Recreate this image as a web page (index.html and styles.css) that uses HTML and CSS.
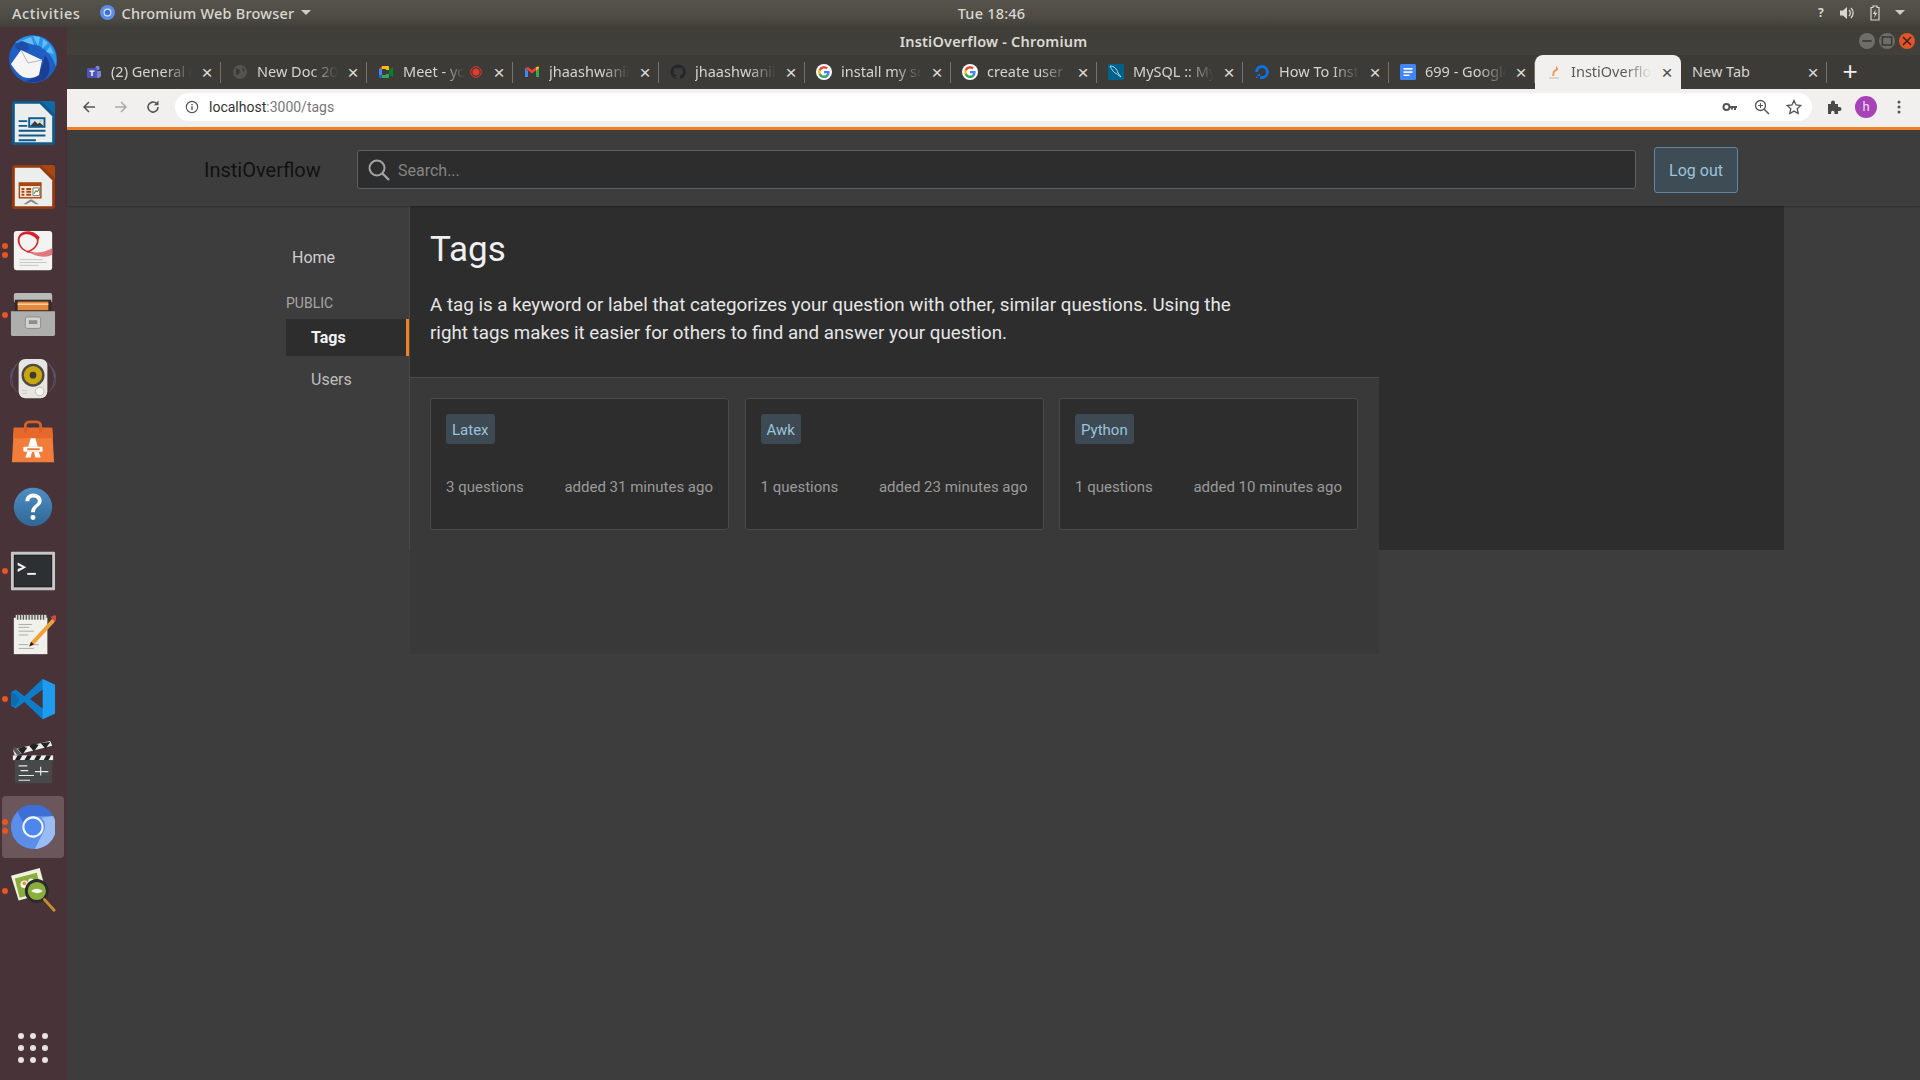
FILE: index.html
```html
<!DOCTYPE html>
<html lang="en">
<head>
<meta charset="utf-8">
<title>InstiOverflow - Chromium</title>
<link rel="stylesheet" href="styles.css">
</head>
<body>
<header class="topbar">
  <div class="tb-left">
    <span class="tb-act">Activities</span>
    <span class="tb-app">
      <svg class="tb-chrome" viewBox="0 0 16 16"><circle cx="8" cy="8" r="8" fill="#5c8de8"/><circle cx="8" cy="8" r="3.6" fill="#3f6fd8" stroke="#dfe8fb" stroke-width="1.2"/></svg>
      Chromium Web Browser
      <i class="caret"></i>
    </span>
  </div>
  <div class="tb-clock">Tue 18:46</div>
  <div class="tb-right">
    <span class="tb-q">?</span>
    <svg class="tb-ic" viewBox="0 0 16 16"><path d="M1 5.5h3L8 2v12l-4-3.500H1z" fill="#d8d6d0"/><path d="M10 5a4 4 0 0 1 0 6M12 3a7 7 0 0 1 0 10" fill="none" stroke="#d8d6d0" stroke-width="1.300"/></svg>
    <svg class="tb-ic" viewBox="0 0 16 16"><path d="M6 1h4v1.500h2V15H4V2.500h2z" fill="none" stroke="#d8d6d0" stroke-width="1.200"/><path d="M9 4 5.800 9H8l-1 4 3.300-5.200H8z" fill="#d8d6d0"/></svg>
    <i class="caret caret-r"></i>
  </div>
</header>

<div class="shell">
  <nav class="dock">
    <div class="dock-item">
      <svg class="dock-ic dock-ic-full" viewBox="0 0 48 48"><circle cx="24" cy="24" r="24" fill="#1f5fc4"/><path d="M6 8C16-2 36-3 45 14c3 6 3 13 2 18-3-10-9-17-17-21C22 7 14 8 6 8z" fill="#2b95ea"/><path d="M12 6 22 2l3 8zM24 1l7 1-2 9zM34 4l5 4-6 6zM41 11l4 8-8-2z" fill="#62bdf2"/><path d="M36 20c6 8 6 18 0 24-6 4-14 4-20 2 8-1 16-6 20-26z" fill="#1b3f94"/><path d="M6 12c2-5 7-7 10-5 3 1 4 4 4 7l-8 4z" fill="#1d4fa8"/><path d="M2 29 12 15l21 10-3 15c-4 3-10 4-16 2-5-3-9-8-12-13z" fill="#f5f5f3"/><path d="M12 15l7 13 14-3" fill="none" stroke="#b4b8c0"/></svg>
    </div>
    <div class="dock-item">
      <svg class="dock-ic" viewBox="0 0 48 48"><path d="M2 4a3 3 0 0 1 3-3h28l14 14v29a3 3 0 0 1-3 3H5a3 3 0 0 1-3-3z" fill="#0e5a8c"/><path d="M32 1h12a3 3 0 0 1 3 3v11z" fill="#0e6aa5"/><path d="M5 4h26l13 13v27H5z" fill="#eceeee"/><path d="M9 21h9v2H9zM9 26h9v2H9zM9 31h28v2H9zM9 36h28v2H9zM9 41h18v2H9z" fill="#0e5a8c"/><path d="M19 18h18v11H19z" fill="#0e5a8c"/><path d="M21 20h14v7H21z" fill="#cfe6f2"/><path d="M21 27l5-5 3 3 2-1.500 4 3.500z" fill="#3c3c3c"/><circle cx="32" cy="22" r="1.200" fill="#f3c33c"/></svg>
    </div>
    <div class="dock-item">
      <svg class="dock-ic" viewBox="0 0 48 48"><path d="M2 4a3 3 0 0 1 3-3h28l14 14v29a3 3 0 0 1-3 3H5a3 3 0 0 1-3-3z" fill="#943a0c"/><path d="M32 1h12a3 3 0 0 1 3 3v11z" fill="#a8470f"/><path d="M5 4h26l13 13v27H5z" fill="#eceeee"/><path d="M9 19h24v17H9z" fill="#a8470f"/><path d="M10.500 23h21v11.500h-21z" fill="#f6e9dd"/><path d="M12 25h3v2h-3zM17 25h5v2h-5zM12 28h3v2h-3zM17 28h5v2h-5zM12 31h3v2h-3zM17 31h5v2h-5z" fill="#a8470f"/><path d="M24 25h7v8h-7z" fill="#fff" stroke="#777"/><path d="M25 31l2-3 1.500 1 2-3" fill="none" stroke="#4c9b36" stroke-width="1.200"/><path d="M21 37l-7 5h3l5-3h0l5 3h3l-7-5z" fill="#888"/></svg>
    </div>
    <div class="dock-item">
      <span class="run run-a"></span><span class="run run-b"></span>
      <svg class="dock-ic" viewBox="0 0 48 48"><rect x="4" y="3" width="40" height="41" rx="3" fill="#f3f3f1"/><path d="M44 21c-9 5-19 6-27 2 8 7 20 9 27 5z" fill="#e0777c"/><path d="M29 13C22 4 10 5 10 13c0 7 7 12 15 13-9 1-17-6-17-13C8 2 24 0 31 10z" fill="#d4242c"/><path d="M27 8c5 6 0 14-9 17" fill="none" stroke="#d4242c" stroke-width="1.600"/><path d="M10 33h24M10 36h28M10 39h20" stroke="#c3c3c1"/></svg>
    </div>
    <div class="dock-item">
      <span class="run run-c"></span>
      <svg class="dock-ic" viewBox="0 0 48 48"><rect x="4" y="1" width="40" height="10" rx="2" fill="#b9b9b7"/><path d="M5 8h38v12H5z" fill="#2f2c29"/><path d="M8 10h32v9H8z" fill="#e58a3c"/><path d="M8 12h32v1.500H8z" fill="#f8d7a4"/><path d="M1 20h46v24a2 2 0 0 1-2 2H3a2 2 0 0 1-2-2z" fill="#aeaeac"/><rect x="16" y="26" width="16" height="12" rx="2" fill="#d2d2d0" stroke="#8b8b8b"/><rect x="19" y="29" width="10" height="5" rx="1" fill="#8d8d8d" stroke="#eee" stroke-width=".6"/></svg>
    </div>
    <div class="dock-item">
      <svg class="dock-ic" viewBox="0 0 48 48"><path d="M7 8a24 24 0 0 0 0 30M3 13a20 20 0 0 0 0 20M41 8a24 24 0 0 1 0 30M45 13a20 20 0 0 1 0 20M10 6a26 26 0 0 0-9 17M38 6a26 26 0 0 1 9 17" fill="none" stroke="#5f6e90" stroke-opacity=".55"/><rect x="9" y="3" width="30" height="41" rx="7" fill="#e6e5e0"/><circle cx="24" cy="20" r="12" fill="#4c4a44"/><circle cx="24" cy="20" r="9.500" fill="#c9a610"/><circle cx="24" cy="20" r="3.500" fill="#3d3a32"/><circle cx="31" cy="37" r="4.500" fill="#f5f5f2" stroke="#bbb"/><path d="M13 36h5M13 39h5" stroke="#c9c9c4"/></svg>
    </div>
    <div class="dock-item">
      <svg class="dock-ic" viewBox="0 0 48 48"><path d="M4 8h40l2 36H2z" fill="#f27d3a"/><path d="M4 8h40l1 11H3z" fill="#e8682c"/><path d="M16 13V6a4 4 0 0 1 4-4h8a4 4 0 0 1 4 4v7" fill="none" stroke="#d4602a" stroke-width="3"/><path d="M21.500 19h5l2.500 9H19zM18 33h5l-1.500 6H16zM25 33h5l2 6h-5.500z" fill="#fff"/><rect x="14" y="28" width="20" height="5" rx="1" fill="#fff"/><rect x="18" y="29.500" width="13" height="2" fill="#ef7635"/></svg>
    </div>
    <div class="dock-item">
      <svg class="dock-ic" viewBox="0 0 48 48"><defs><linearGradient id="hg" x1="0" y1="0" x2="0" y2="1"><stop offset="0" stop-color="#4f8fc4"/><stop offset="1" stop-color="#2f6796"/></linearGradient></defs><circle cx="24" cy="24" r="20" fill="url(#hg)"/><path d="M16 18c0-5 4-8 8-8 5 0 9 3 9 7.500 0 6-7 6-7 12h-4c0-7 7-7.500 7-12 0-2-2-3.500-4.500-3.500S20 15.500 20 18z" fill="#fff"/><circle cx="24" cy="35" r="2.600" fill="#fff"/></svg>
    </div>
    <div class="dock-item">
      <span class="run run-c"></span>
      <svg class="dock-ic" viewBox="0 0 48 48"><rect x="1" y="4" width="46" height="40" rx="1" fill="#c6c6c4"/><rect x="4" y="7" width="40" height="34" fill="#1d1f20"/><rect x="5" y="8" width="38" height="32" fill="#2d3032"/><path d="M8 15l9 5-9 5v-3l5-2-5-2z" fill="#f2f2f2"/><path d="M18 26h9v2h-9z" fill="#f2f2f2"/></svg>
    </div>
    <div class="dock-item">
      <svg class="dock-ic" viewBox="0 0 48 48"><rect x="4" y="6" width="35" height="38" fill="#f1f1ec"/><path d="M6 3h32v5H6z" fill="#dcdcd8"/><path d="M8 3v5M11 3v5M14 3v5M17 3v5M20 3v5M23 3v5M26 3v5M29 3v5M32 3v5M35 3v5" stroke="#555" stroke-width="1.300"/><path d="M9 13h14M9 16h11M9 20h16M9 24h10M9 34h10M9 38h16M21 34h9" stroke="#a9a9a6"/><path d="M44 7l3 3-22 24-5 2 2-5z" fill="#f0a23a"/><path d="M42 5l5 5 1.500-2a2.500 2.500 0 0 0-4-3.500z" fill="#e0443e"/><path d="M20 36l2-5 3 3z" fill="#222"/></svg>
    </div>
    <div class="dock-item">
      <span class="run run-c"></span>
      <svg class="dock-ic" viewBox="0 0 48 48"><path d="M34 3l13 6v30l-13 6-19-18-9 7-5-3v-14l5-3 9 7z" fill="#0e7cc9"/><path d="M34 3l13 6v30l-13 6z" fill="#1e9bef"/><path d="M34 14 21 24l13 10z" fill="#483338"/><path d="M6 19 1 17v14l5 0 4-7z" fill="#0c6cae"/></svg>
    </div>
    <div class="dock-item">
      <svg class="dock-ic" viewBox="0 0 48 48"><path d="M3 10 42 1l2 5L5 16z" fill="#eee"/><path d="M8 9l5 6 5-7-4-1zM20 6l5 6 5-7-5-1zM32 3l5 6 5-7z" fill="#222"/><path d="M3 10l4 5 5-1-7-7z" fill="#555"/><rect x="3" y="16" width="42" height="5" fill="#eee"/><path d="M8 16l-3 5h5l3-5zM18 16l-3 5h5l3-5zM28 16l-3 5h5l3-5zM38 16l-3 5h5l3-5z" fill="#222"/><rect x="5" y="21" width="39" height="24" rx="1" fill="#47484a"/><path d="M9 27h9M11 32h8M9 37h16M26 33h14M32 28v9M9 42h12" stroke="#e8e8e8" stroke-width="1.200"/></svg>
    </div>
    <div class="dock-item dock-active">
      <span class="run run-a"></span><span class="run run-b"></span>
      <svg class="dock-ic dock-ic-lg" viewBox="0 0 48 48"><circle cx="24" cy="24" r="24" fill="#5a8ee9"/><path d="M7 7a24 24 0 0 1 39 5H24a12 12 0 0 0-11 7z" fill="#3e6fd6"/><path d="M46 12a24 24 0 0 1-20 36l9-18a12 12 0 0 0-2-16z" fill="#9abcf4"/><circle cx="24" cy="24" r="10.500" fill="#4d87ee" stroke="#f2f6ff" stroke-width="2.200"/></svg>
    </div>
    <div class="dock-item">
      <span class="run run-c"></span>
      <svg class="dock-ic" viewBox="0 0 48 48"><path d="M1 8 31 0l7 26L9 34z" fill="#eff2dc"/><path d="M5 11l23-6 5 20-23 6z" fill="#8bad3e"/><circle cx="15" cy="17" r="4" fill="#f6f6ee"/><circle cx="22" cy="14" r="3" fill="#f6f6ee"/><circle cx="15" cy="16" r="2" fill="#e9962c"/><circle cx="28" cy="24" r="11" fill="#8bad3e" stroke="#2c2c30" stroke-width="3"/><path d="M22 24c4-3 8-3 12 0-3 3-8 3-12 0z" fill="#f3f3ec"/><path d="M36 33l10 11" stroke="#c58f2b" stroke-width="3" stroke-linecap="round"/></svg>
    </div>
    <div class="dock-spacer"></div>
    <div class="dock-grid">
      <i></i><i></i><i></i><i></i><i></i><i></i><i></i><i></i><i></i>
    </div>
  </nav>

  <div class="window">
    <div class="titlebar">
      <span class="win-title">InstiOverflow - Chromium</span>
      <div class="win-btns">
        <span class="wbtn"><svg viewBox="0 0 12 12"><path d="M2.500 6h7" stroke="#3a3a36" stroke-width="1.300"/></svg></span>
        <span class="wbtn"><svg viewBox="0 0 12 12"><rect x="2.500" y="3" width="7" height="6" fill="none" stroke="#3a3a36" stroke-width="1.200"/></svg></span>
        <span class="wbtn wbtn-close"><svg viewBox="0 0 12 12"><path d="M3 3l6 6M9 3l-6 6" stroke="#3a2018" stroke-width="1.200"/></svg></span>
      </div>
    </div>

    <div class="tabstrip">
      <div class="tab"><svg class="fav" viewBox="0 0 16 16"><circle cx="11.500" cy="4" r="2.200" fill="#7b83d6"/><path d="M9 7h6v5a3 3 0 0 1-5 1z" fill="#7b83d6"/><rect x="1" y="4" width="10" height="10" rx="1.200" fill="#4e55b5"/><path d="M3.500 6.500h5v1.200H6.700V12H5.300V7.700H3.500z" fill="#fff"/></svg><span class="tab-t">(2) General (</span><span class="tab-x">×</span></div>
      <div class="tab"><svg class="fav" viewBox="0 0 16 16"><circle cx="8" cy="8" r="7" fill="#55544f"/><path d="M4 4l4 2-1 4-3 1zM10 3l3 3-2 2z" fill="#3b3a36"/></svg><span class="tab-t">New Doc 20</span><span class="tab-x">×</span></div>
      <div class="tab"><svg class="fav" viewBox="0 0 16 16"><path d="M4 2 1 5h3z" fill="#ea4335"/><path d="M4 2h6a1 1 0 0 1 1 1v3H8V5H4z" fill="#fbbc04"/><path d="M1 5h3v6H1z" fill="#4285f4"/><path d="M1 11h3v3H2a1 1 0 0 1-1-1z" fill="#1967d2"/><path d="M4 11h4v-1h3v3a1 1 0 0 1-1 1H4z" fill="#34a853"/><path d="M11 6v4l1 1 3 2V3l-3 2z" fill="#00832d"/></svg><span class="tab-t">Meet - yo</span><svg class="rec" viewBox="0 0 12 12"><circle cx="6" cy="6" r="5.300" fill="none" stroke="#ea3a2e"/><circle cx="6" cy="6" r="3.500" fill="#ea3a2e"/></svg><span class="tab-x">×</span></div>
      <div class="tab"><svg class="fav" viewBox="0 0 16 16"><path d="M1 4v9h3V7z" fill="#4285f4"/><path d="M12 7v6h3V4z" fill="#34a853"/><path d="M1 4l7 5.500L15 4l-3-1-4 3-4-3z" fill="#ea4335"/><path d="M12 3l3-.500V4l-3 3z" fill="#fbbc04"/></svg><span class="tab-t">jhaashwanii</span><span class="tab-x">×</span></div>
      <div class="tab"><svg class="fav" viewBox="0 0 16 16"><path d="M8 .500a7.500 7.500 0 0 0-2.400 14.600c.4.100.5-.2.500-.4v-1.400c-2.100.500-2.500-1-2.500-1-.3-.9-.8-1.100-.8-1.100-.7-.5 0-.5 0-.5.800.100 1.200.8 1.200.8.700 1.100 1.800.8 2.300.6.100-.5.300-.8.500-1-1.700-.2-3.400-.8-3.400-3.700 0-.8.300-1.500.8-2-.1-.2-.3-1 .1-2 0 0 .6-.2 2.100.8a7 7 0 0 1 3.800 0c1.500-1 2.100-.8 2.100-.8.400 1 .2 1.800.1 2 .5.500.8 1.200.8 2 0 2.900-1.800 3.500-3.400 3.700.3.200.5.700.5 1.400v2.100c0 .2.100.5.500.4A7.500 7.500 0 0 0 8 .500z" fill="#23262a"/></svg><span class="tab-t">jhaashwanii</span><span class="tab-x">×</span></div>
      <div class="tab"><svg class="fav" viewBox="0 0 16 16"><circle cx="8" cy="8" r="8" fill="#fff"/><path d="M13.600 8.200c0-.4 0-.8-.1-1.200H8v2.300h3.100a2.700 2.700 0 0 1-1.100 1.700v1.500h1.900c1.100-1 1.700-2.500 1.700-4.300z" fill="#4285f4"/><path d="M8 14c1.600 0 2.900-.5 3.900-1.500L10 11c-.5.400-1.200.6-2 .6-1.500 0-2.800-1-3.300-2.400H2.800v1.500A6 6 0 0 0 8 14z" fill="#34a853"/><path d="M4.700 9.200a3.600 3.600 0 0 1 0-2.400V5.300H2.800a6 6 0 0 0 0 5.400z" fill="#fbbc05"/><path d="M8 4.400c.9 0 1.600.3 2.200.9l1.700-1.700A6 6 0 0 0 2.800 5.300l1.900 1.500C5.200 5.400 6.500 4.400 8 4.400z" fill="#ea4335"/></svg><span class="tab-t">install my sq</span><span class="tab-x">×</span></div>
      <div class="tab"><svg class="fav" viewBox="0 0 16 16"><circle cx="8" cy="8" r="8" fill="#fff"/><path d="M13.600 8.200c0-.4 0-.8-.1-1.200H8v2.300h3.100a2.700 2.700 0 0 1-1.100 1.700v1.500h1.900c1.100-1 1.700-2.500 1.700-4.300z" fill="#4285f4"/><path d="M8 14c1.600 0 2.900-.5 3.900-1.500L10 11c-.5.400-1.200.6-2 .6-1.500 0-2.800-1-3.300-2.400H2.800v1.500A6 6 0 0 0 8 14z" fill="#34a853"/><path d="M4.700 9.200a3.600 3.600 0 0 1 0-2.400V5.300H2.800a6 6 0 0 0 0 5.400z" fill="#fbbc05"/><path d="M8 4.400c.9 0 1.600.3 2.200.9l1.700-1.700A6 6 0 0 0 2.800 5.300l1.900 1.500C5.200 5.400 6.500 4.400 8 4.400z" fill="#ea4335"/></svg><span class="tab-t">create user i</span><span class="tab-x">×</span></div>
      <div class="tab"><svg class="fav" viewBox="0 0 16 16"><rect width="16" height="16" fill="#00618a"/><path d="M2 2c4 0 7 3 8 7l3 4c-2-1-3-2-4-3-3-1-5-4-7-8z" fill="none" stroke="#e6eef2" stroke-width=".8"/></svg><span class="tab-t">MySQL :: My</span><span class="tab-x">×</span></div>
      <div class="tab"><svg class="fav" viewBox="0 0 16 16"><path d="M8 1a7 7 0 0 1 1 13.900v-3a4 4 0 1 0-5-4H1A7 7 0 0 1 8 1z" fill="#0b74e5"/><path d="M6 12h3v3H6zM3.500 10H6v2H3.500zM2 12.500h1.500V14H2z" fill="#0b74e5"/></svg><span class="tab-t">How To Inst</span><span class="tab-x">×</span></div>
      <div class="tab"><svg class="fav" viewBox="0 0 16 16"><rect x="0" y="0" width="16" height="16" rx="1.500" fill="#4285f4"/><path d="M3.500 4h9v1.700h-9zM3.500 7.200h9v1.700h-9zM3.500 10.400h6v1.700h-6z" fill="#f1f3f4"/></svg><span class="tab-t">699 - Google</span><span class="tab-x">×</span></div>
      <div class="tab tab-active"><svg class="fav" viewBox="0 0 16 16"><path d="M3 13h10v2H3z" fill="#d9d6d2"/><path d="M6 12l1-5 4-3 1 2-3 2-1 4z" fill="#f0a25c"/><path d="M10 2l2 3-2 1z" fill="#f48024"/></svg><span class="tab-t">InstiOverflo</span><span class="tab-x">×</span></div>
      <div class="tab tab-new"><span class="tab-t tab-plain">New Tab</span><span class="tab-x">×</span></div>
      <span class="newtab">+</span>
    </div>

    <div class="toolbar">
      <svg class="tbtn" viewBox="0 0 16 16"><path d="M14 8H3M8 3 3 8l5 5" fill="none" stroke="#555" stroke-width="1.500"/></svg>
      <svg class="tbtn" viewBox="0 0 16 16"><path d="M2 8h11M8 3l5 5-5 5" fill="none" stroke="#aaa" stroke-width="1.500"/></svg>
      <svg class="tbtn" viewBox="0 0 16 16"><path d="M13 8a5 5 0 1 1-1.500-3.500" fill="none" stroke="#555" stroke-width="1.600"/><path d="M13.500 1.500v4.700H8.800z" fill="#555"/></svg>
      <div class="omnibox">
        <svg class="omni-i" viewBox="0 0 16 16"><circle cx="8" cy="8" r="6.500" fill="none" stroke="#555" stroke-width="1.300"/><path d="M7.200 7h1.600v4.500H7.200zM7.200 4.500h1.600V6H7.200z" fill="#555"/></svg>
        <span class="url"><b>localhost</b>:3000/tags</span>
        <span class="omni-end">
          <svg class="omni-a" viewBox="0 0 16 16"><circle cx="4.500" cy="8" r="3" fill="none" stroke="#555" stroke-width="2"/><path d="M7 7h8v2h-1v2h-2V9h-1v1.500H9V9H7z" fill="#555"/></svg>
          <svg class="omni-a" viewBox="0 0 16 16"><circle cx="6.500" cy="6.500" r="5" fill="none" stroke="#555" stroke-width="1.300"/><path d="M10.200 10.200 15 15" stroke="#555" stroke-width="1.500"/><path d="M4 6.500h5M6.500 4v5" stroke="#555"/></svg>
          <svg class="omni-a" viewBox="0 0 16 16"><path d="m8 1.500 2 4.500 4.800.5-3.600 3.200 1 4.800L8 12.100 3.800 14.500l1-4.800L1.200 6.500 6 6z" fill="none" stroke="#555" stroke-width="1.300"/></svg>
        </span>
      </div>
      <svg class="tbtn ext" viewBox="0 0 16 16"><path d="M2 5h3V3.500a2 2 0 0 1 4 0V5h3v3h1.500a2 2 0 0 1 0 4H12v3H8.500v-1.500a1.700 1.700 0 0 0-3.400 0V15H2z" fill="#4a4a4a"/></svg>
      <span class="avatar">h</span>
      <svg class="tbtn menu" viewBox="0 0 16 16"><circle cx="8" cy="3" r="1.500" fill="#555"/><circle cx="8" cy="8" r="1.500" fill="#555"/><circle cx="8" cy="13" r="1.500" fill="#555"/></svg>
    </div>

    <div class="page">
      <div class="nav">
        <span class="brand">InstiOverflow</span>
        <div class="search">
          <svg class="search-i" viewBox="0 0 22 22"><circle cx="9" cy="9" r="7.500" fill="none" stroke="#a3a3a3" stroke-width="2"/><path d="m14.500 14.500 6.500 6.500" stroke="#a3a3a3" stroke-width="2.400"/></svg>
          <span class="search-p">Search...</span>
        </div>
        <button class="logout">Log out</button>
      </div>
      <div class="content">
        <aside class="side">
          <a class="side-home">Home</a>
          <div class="side-label">PUBLIC</div>
          <a class="side-link side-on">Tags</a>
          <a class="side-link">Users</a>
        </aside>
        <main class="main">
          <section class="intro">
            <h1>Tags</h1>
            <p>A tag is a keyword or label that categorizes your question with other, similar questions. Using the right tags makes it easier for others to find and answer your question.</p>
          </section>
          <section class="cards">
            <article class="card">
              <span class="tag">Latex</span>
              <div class="meta"><span>3 questions</span><span>added 31 minutes ago</span></div>
            </article>
            <article class="card">
              <span class="tag">Awk</span>
              <div class="meta"><span>1 questions</span><span>added 23 minutes ago</span></div>
            </article>
            <article class="card">
              <span class="tag">Python</span>
              <div class="meta"><span>1 questions</span><span>added 10 minutes ago</span></div>
            </article>
          </section>
        </main>
      </div>
    </div>
  </div>
</div>
</body>
</html>
```

FILE: styles.css
```css
* { box-sizing: border-box; }
html, body { margin: 0; height: 100%; overflow: hidden; }
body { width: 1920px; height: 1080px; background: #3d3d3d; font-family: Roboto, "Noto Sans", sans-serif; display: flex; flex-direction: column; }

/* GNOME top bar */
.topbar { height: 27px; flex: none; display: grid; grid-template-columns: 1fr auto 1fr; align-items: center; padding: 0 15px 2px 12px; background: linear-gradient(#55524a, #4f4c45 60%, #403f3a); color: #d9d7d1; font: 500 14.500px "Noto Sans", sans-serif; letter-spacing: .2px; }
.tb-left { display: flex; align-items: center; gap: 20px; }
.tb-act { letter-spacing: .6px; }
.tb-app { display: flex; align-items: center; gap: 6px; }
.tb-chrome { width: 15px; height: 15px; }
.caret { width: 0; height: 0; border-left: 5px solid transparent; border-right: 5px solid transparent; border-top: 5px solid #cfcdc7; margin-left: 1px; }
.tb-clock { text-align: center; transform: translateX(33px); }
.tb-right { display: flex; align-items: center; justify-content: flex-end; gap: 12px; }
.tb-q { font-size: 12px; font-weight: 700; margin-right: 3px; }
.tb-ic { width: 16px; height: 16px; }
.caret-r { margin-left: 0; }

.shell { flex: 1; display: flex; min-height: 0; }

/* Dock */
.dock { width: 67px; flex: none; background: #483338; display: flex; flex-direction: column; position: relative; }
.dock-item { height: 64px; flex: none; display: flex; align-items: center; justify-content: center; position: relative; }
.dock-ic { width: 46px; height: 46px; margin-left: -1px; }
.dock-ic-full { width: 48px; height: 48px; }
.dock-ic-lg { width: 44px; height: 44px; }
.dock-active::before { content: ""; position: absolute; left: 2px; top: 1px; width: 62px; height: 62px; border-radius: 4px; background: #6b575b; }
.dock-active .dock-ic { position: relative; }
.run { position: absolute; left: 2px; width: 6px; height: 6px; border-radius: 50%; background: #e95420; z-index: 1; }
.run-a { top: 24px; }
.run-b { top: 33px; }
.run-c { top: 29px; }
.dock-spacer { flex: 1; }
.dock-grid { display: grid; grid-template-columns: repeat(3, 6px); gap: 6px; justify-content: center; padding: 0 1px 17px 0; }
.dock-grid i { width: 6px; height: 6px; border-radius: 50%; background: #e6e3e1; }

/* Browser chrome */
.window { flex: 1; min-width: 0; display: flex; flex-direction: column; }
.titlebar { height: 28px; flex: none; display: flex; align-items: center; justify-content: center; position: relative; padding-bottom: 1px; background: linear-gradient(#3f3d38, #42403b); color: #dcdad4; font: 600 14.500px "Noto Sans", sans-serif; letter-spacing: .2px; }
.win-btns { position: absolute; right: 5px; top: 6px; display: flex; gap: 4px; }
.wbtn { width: 16px; height: 16px; border-radius: 50%; background: #6f6d68; display: block; }
.wbtn svg { display: block; width: 16px; height: 16px; }
.wbtn-close { background: #e2552a; }

.tabstrip { height: 34px; flex: none; background: #3c3b37; display: flex; align-items: stretch; padding-left: 8px; }
.tab { width: 146px; flex: none; display: flex; align-items: center; padding: 0 6px 0 11px; position: relative; color: #d5d4d1; font: 400 14.500px "Noto Sans", sans-serif; }
.tab::after { content: ""; position: absolute; right: 0; top: 7px; bottom: 6px; width: 1px; background: #74736e; }
.fav { width: 16px; height: 16px; flex: none; margin-right: 9px; }
.tab-t { flex: 1; min-width: 0; margin-right: 2px; padding-bottom: 2px; overflow: hidden; white-space: nowrap; -webkit-mask-image: linear-gradient(90deg, #000 62%, transparent 94%); mask-image: linear-gradient(90deg, #000 62%, transparent 94%); }
.tab-plain { -webkit-mask-image: none; mask-image: none; }
.rec { width: 12px; height: 12px; flex: none; margin-right: 9px; }
.tab-x { width: 16px; flex: none; text-align: center; color: #dedcd8; font: 400 19px/1 "Liberation Sans", sans-serif; }
.tab-active { background: #f1f0ee; color: #5a5a5a; border-radius: 8px 8px 0 0; }
.tab-active::after { display: none; }
.tab-active .tab-x { color: #4a4a4a; }
.tab-new { padding-left: 11px; }
.newtab { width: 46px; text-align: center; color: #eee; font: 300 26px/33px "Liberation Sans", sans-serif; }

.toolbar { height: 38px; flex: none; background: #f1f0ee; display: flex; align-items: center; padding: 0 0 2px 14px; }
.tbtn { width: 16px; height: 16px; flex: none; margin-right: 16px; }
.omnibox { flex: none; width: 1637px; height: 28px; margin-left: -2px; background: #fff; border-radius: 14px; display: flex; align-items: center; padding: 0 10px 0 10px; }
.omni-i { width: 14px; height: 14px; margin-right: 10px; }
.url { font: 400 14px Roboto, sans-serif; color: #777; }
.url b { font-weight: 400; color: #333; }
.omni-end { margin-left: auto; display: flex; gap: 16px; }
.omni-a { width: 16px; height: 16px; }
.ext { margin-left: 14px; margin-right: 13px; }
.avatar { width: 22px; height: 22px; border-radius: 50%; background: #a742b8; color: #f0dff3; font: 400 13px/22px Roboto, sans-serif; text-align: center; flex: none; margin-right: 14px; }
.menu { margin-right: 0; }

/* Page */
.page { flex: 1; min-height: 0; display: flex; flex-direction: column; border-top: 3px solid #f48024; background: #3d3d3d; }
.nav { height: 76px; flex: none; display: flex; align-items: center; padding: 3px 0 0 137px; background: #3d3d3d; box-shadow: 0 1px 2px rgba(0,0,0,.25); position: relative; }
.brand { width: 153px; flex: none; font-size: 20px; color: #111; }
.search { width: 1279px; height: 39px; flex: none; display: flex; align-items: center; background: #2d2d2d; border: 1px solid #5d6266; border-radius: 3px; padding-left: 10px; }
.search-i { width: 22px; height: 22px; flex: none; margin-right: 8px; }
.search-p { font-size: 16px; color: #858585; padding-top: 2px; }
.logout { margin-left: 18px; width: 84px; height: 46px; background: #3e4c56; border: 1px solid #5f87a5; border-radius: 3px; color: #9cc3db; font: 400 16px Roboto, sans-serif; padding: 1px 0 0; }
.content { flex: 1; min-height: 0; display: flex; align-items: flex-start; }
.side { width: 342px; flex: none; padding: 33px 0 0 219px; align-self: stretch; }
.side-home { display: block; margin-left: 6px; height: 37px; font-size: 16px; line-height: 37px; color: #cfcfcf; }
.side-label { margin-top: 16px; font-size: 14px; line-height: 22px; color: #a6a6a6; }
.side-link { display: block; height: 37px; line-height: 38px; padding-left: 25px; margin-top: 5px; font-size: 16px; color: #bdbdbd; }
.side-on { margin-top: 5px; background: #2d2d2d; border-right: 3px solid #f48024; color: #f2f2f2; font-weight: 700; }
.main { width: 1375px; flex: none; border-left: 1px solid #4a4a4a; background: #2d2d2d; height: 344px; }
.intro { width: 969px; height: 172px; padding: 22px 20px 0; border-bottom: 1px solid #4c4c4c; }
h1 { margin: 0; font-size: 35px; line-height: 44px; font-weight: 400; color: #f0f0f0; }
.intro p { margin: 19px 0 0; width: 820px; font-size: 18.750px; line-height: 28px; color: #e6e6e6; }
.cards { width: 969px; height: 276px; background: #393939; display: grid; grid-template-columns: repeat(3, 299px); gap: 15.500px; padding: 20px 20px 0; align-items: start; }
.card { height: 132px; background: #2d2d2d; border: 1px solid #4a4a4a; border-radius: 3px; padding: 15px; position: relative; }
.tag { display: inline-block; height: 30px; padding: 0 6px; background: #3d4a54; border-radius: 3px; color: #9cc3db; font-size: 15px; line-height: 32px; }
.meta { display: flex; justify-content: space-between; margin-top: 32px; font-size: 15px; line-height: 22px; color: #9a9a9a; }
```
